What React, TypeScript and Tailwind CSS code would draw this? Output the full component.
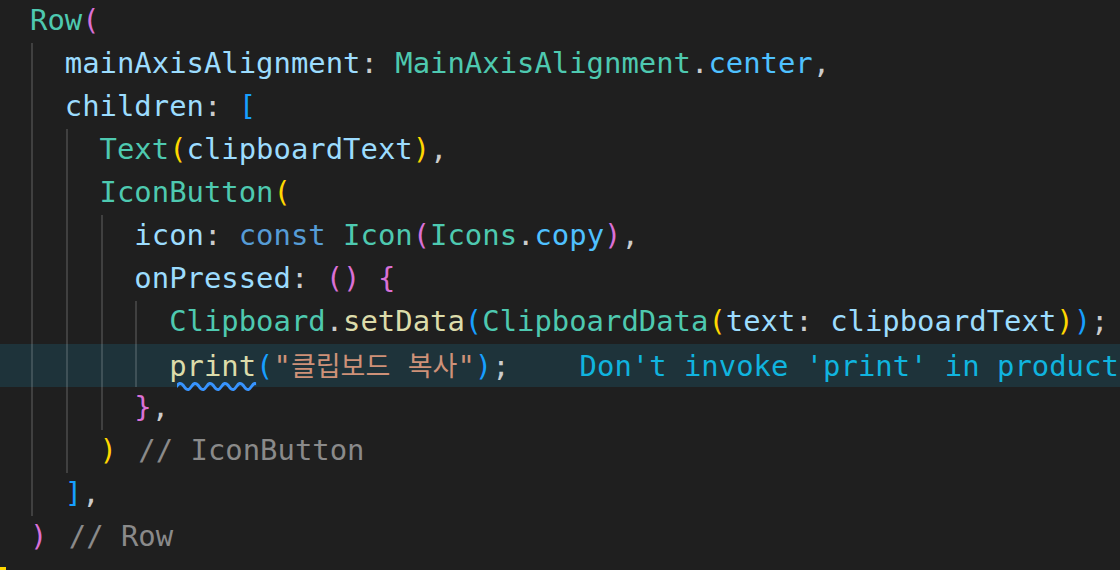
import React from "react";

type Tok = [string, string];

const T = "text-[#4ec9b0]";
const P = "text-[#9cdcfe]";
const K = "text-[#569cd6]";
const F = "text-[#dcdcaa]";
const E = "text-[#4fc1ff]";
const D = "text-[#cccccc]";
const C = "ml-[4px] text-[#8a8a8a]";
const Y = "text-[#ffd700]";
const M = "text-[#da70d6]";
const B = "text-[#179fff]";

const lines: { indent: number; toks: Tok[] }[] = [
  { indent: 0, toks: [["Row", T], ["(", M]] },
  {
    indent: 1,
    toks: [
      ["mainAxisAlignment", P],
      [": ", D],
      ["MainAxisAlignment", T],
      [".", D],
      ["center", E],
      [",", D],
    ],
  },
  { indent: 1, toks: [["children", P], [": ", D], ["[", B]] },
  {
    indent: 2,
    toks: [["Text", T], ["(", Y], ["clipboardText", P], [")", Y], [",", D]],
  },
  { indent: 2, toks: [["IconButton", T], ["(", Y]] },
  {
    indent: 3,
    toks: [
      ["icon", P],
      [": ", D],
      ["const", K],
      [" ", D],
      ["Icon", T],
      ["(", M],
      ["Icons", T],
      [".", D],
      ["copy", E],
      [")", M],
      [",", D],
    ],
  },
  {
    indent: 3,
    toks: [["onPressed", P], [": ", D], ["()", M], [" ", D], ["{", M]],
  },
  {
    indent: 4,
    toks: [
      ["Clipboard", T],
      [".", D],
      ["setData", F],
      ["(", B],
      ["ClipboardData", T],
      ["(", Y],
      ["text", P],
      [": ", D],
      ["clipboardText", P],
      [")", Y],
      [")", B],
      [";", D],
    ],
  },
];

const after: { indent: number; toks: Tok[] }[] = [
  { indent: 3, toks: [["}", M], [",", D]] },
  { indent: 2, toks: [[")", Y], [" // IconButton", C]] },
  { indent: 1, toks: [["]", B], [",", D]] },
  { indent: 0, toks: [[")", M], [" // Row", C]] },
];

function Guides({ n }: { n: number }) {
  return (
    <>
      {Array.from({ length: n }).map((_, i) => (
        <span key={i} className="flex w-[2ch] h-[43px] shrink-0">
          <span className="ml-[1px] w-[2px] h-full bg-white/15" />
        </span>
      ))}
    </>
  );
}

function Line({ indent, toks }: { indent: number; toks: Tok[] }) {
  return (
    <div className="flex h-[43px] items-start pl-[30px] whitespace-pre">
      <Guides n={indent} />
      <span className="leading-[41px] whitespace-pre">
        {toks.map(([t, c], i) => (
          <span key={i} className={c}>
            {t}
          </span>
        ))}
      </span>
    </div>
  );
}

const KO = "font-['Noto_Sans_CJK_KR',sans-serif] text-[27px] text-[#ce9178]";

export default function App() {
  return (
    <div className="w-[1120px] h-[570px] overflow-hidden bg-[#1f1f1f] font-['DejaVu_Sans_Mono','Noto_Sans_CJK_KR',monospace] text-[28.9px]">
      {lines.map((l, i) => (
        <Line key={i} {...l} />
      ))}
      <div className="flex h-[43px] items-start pl-[30px] whitespace-pre bg-[#1e333a]">
        <Guides n={4} />
        <span className="leading-[41px] whitespace-pre">
          <span className="text-[#dcdcaa] underline decoration-wavy decoration-[#3794ff] decoration-[2.5px] underline-offset-[6px]">
            print
          </span>
          <span className={B}>(</span>
          <span className="text-[#ce9178]">"</span>
          <span className={KO}>클립보드</span>
          <span className="text-[#ce9178]"> </span>
          <span className={KO}>복사</span>
          <span className="text-[#ce9178]">"</span>
          <span className={B}>)</span>
          <span className={D}>;</span>
          <span className="ml-[70px] text-[#10b4df]">
            Don't invoke 'print' in production code.
          </span>
        </span>
      </div>
      {after.map((l, i) => (
        <Line key={i} {...l} />
      ))}
      <div className="h-[43px]">
        <div className="mt-[8px] w-[6px] h-[4px] bg-[#ffd700]" />
      </div>
    </div>
  );
}
